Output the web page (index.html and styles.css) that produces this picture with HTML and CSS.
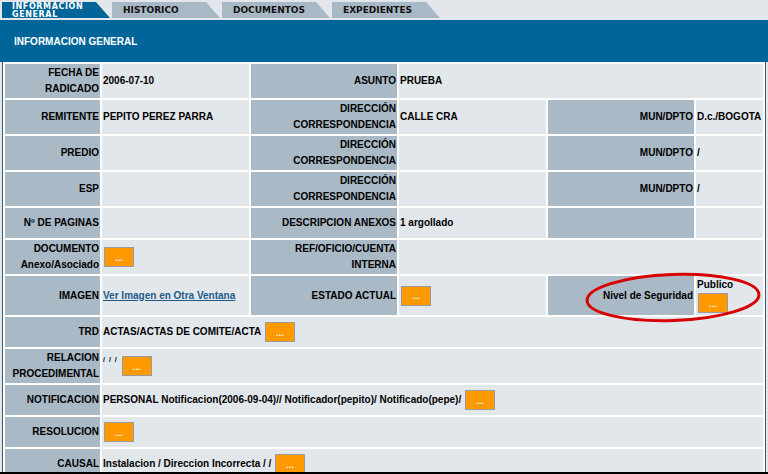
FILE: index.html
```html
<!DOCTYPE html>
<html lang="es">
<head>
    <meta charset="UTF-8">
    <title>Informacion General</title>
    <link rel="stylesheet" href="styles.css">
</head>
<body>
<div class="page">
    <div class="tabs">
        <div class="tab active">INFORMACION<br>GENERAL</div>
        <div class="tab">HISTORICO</div>
        <div class="tab">DOCUMENTOS</div>
        <div class="tab">EXPEDIENTES</div>
    </div>

    <div class="titulo">INFORMACION GENERAL</div>

    <table class="datos">
        <colgroup>
            <col class="c1"><col class="c2"><col class="c3"><col class="c4"><col class="c5"><col>
        </colgroup>
        <tr>
            <td class="lbl">FECHA DE<br>RADICADO</td>
            <td>2006-07-10</td>
            <td class="lbl">ASUNTO</td>
            <td colspan="3">PRUEBA</td>
        </tr>
        <tr>
            <td class="lbl">REMITENTE</td>
            <td>PEPITO PEREZ PARRA</td>
            <td class="lbl">DIRECCIÓN<br>CORRESPONDENCIA</td>
            <td>CALLE CRA</td>
            <td class="lbl">MUN/DPTO</td>
            <td class="nowrap">D.c./BOGOTA</td>
        </tr>
        <tr>
            <td class="lbl">PREDIO</td>
            <td></td>
            <td class="lbl">DIRECCIÓN<br>CORRESPONDENCIA</td>
            <td></td>
            <td class="lbl">MUN/DPTO</td>
            <td>/</td>
        </tr>
        <tr>
            <td class="lbl">ESP</td>
            <td></td>
            <td class="lbl">DIRECCIÓN<br>CORRESPONDENCIA</td>
            <td></td>
            <td class="lbl">MUN/DPTO</td>
            <td>/</td>
        </tr>
        <tr>
            <td class="lbl">Nº DE PAGINAS</td>
            <td></td>
            <td class="lbl">DESCRIPCION ANEXOS</td>
            <td>1 argollado</td>
            <td class="lbl"></td>
            <td></td>
        </tr>
        <tr>
            <td class="lbl">DOCUMENTO<br>Anexo/Asociado</td>
            <td><button class="btn">...</button></td>
            <td class="lbl">REF/OFICIO/CUENTA<br>INTERNA</td>
            <td colspan="3"></td>
        </tr>
        <tr>
            <td class="lbl">IMAGEN</td>
            <td><a href="#" class="enlace">Ver Imagen en Otra Ventana</a></td>
            <td class="lbl">ESTADO ACTUAL</td>
            <td><button class="btn">...</button></td>
            <td class="lbl">Nivel de Seguridad</td>
            <td>
                <div>Publico</div>
                <button class="btn bloque">...</button>
            </td>
        </tr>
        <tr>
            <td class="lbl">TRD</td>
            <td colspan="5">ACTAS/ACTAS DE COMITE/ACTA <button class="btn">...</button></td>
        </tr>
        <tr>
            <td class="lbl">RELACION<br>PROCEDIMENTAL</td>
            <td colspan="5"><span class="chico">/ / /</span> <button class="btn">...</button></td>
        </tr>
        <tr>
            <td class="lbl">NOTIFICACION</td>
            <td colspan="5">PERSONAL Notificacion(2006-09-04)// Notificador(pepito)/ Notificado(pepe)/ <button class="btn">...</button></td>
        </tr>
        <tr>
            <td class="lbl">RESOLUCION</td>
            <td colspan="5"><button class="btn">...</button></td>
        </tr>
        <tr>
            <td class="lbl">CAUSAL</td>
            <td colspan="5">Instalacion / Direccion Incorrecta / / <button class="btn">...</button></td>
        </tr>
    </table>

    <!-- marca roja sobre el nivel de seguridad -->
    <svg class="marca" width="186" height="60" viewBox="0 0 186 60">
        <ellipse cx="91" cy="29.5" rx="86" ry="23" transform="rotate(-2 91 29.5)"
                 fill="none" stroke="#d80000" stroke-width="3"/>
    </svg>
</div>
</body>
</html>
```

FILE: styles.css
```css
body {
    margin: 0;
    background: #e3e7eb;
    font-family: "Liberation Sans", Arial, sans-serif;
    font-size: 10px;
    font-weight: bold;
    color: #000;
}

.page {
    position: relative;
    height: 472px;
    overflow: hidden;
    border-bottom: 2px solid #000;
}

/* pestañas */
.tabs {
    display: flex;
    gap: 2px;
    padding: 2px 0 2px 2px;
}

.tab {
    width: 108px;
    height: 16px;
    box-sizing: border-box;
    padding: 1px 0 0 11px;
    background: #a8b8c4;
    clip-path: polygon(0 0, 94px 0, 100% 100%, 0 100%);
    font-family: "DejaVu Sans", Verdana, sans-serif;
    font-size: 9px;
    line-height: 15px;
    color: #111;
}

.tab.active {
    padding: 1px 0 0 10px;
    background: #006699;
    color: #fff;
    font-size: 8px;
    line-height: 7.5px;
    letter-spacing: 0.6px;
}

.titulo {
    height: 42px;
    line-height: 43px;
    padding-left: 14px;
    background: #006699;
    color: #fff;
}

/* tabla de datos */
.datos {
    width: 764px;
    margin-left: 2px;
    border-left: 1px solid #3f5a6c;
    border-right: 1px solid #3f5a6c;
    border-spacing: 2px;
    table-layout: fixed;
    background: #fff;
}

.c1 { width: 95px; }
.c2 { width: 147px; }
.c3 { width: 146px; }
.c4 { width: 147px; }
.c5 { width: 146px; }

.datos td {
    height: 28px;
    padding: 1px;
    line-height: 16px;
    background: #e2e7eb;
    vertical-align: middle;
}

.datos td.lbl {
    background: #a9b9c5;
    text-align: right;
}

.nowrap {
    white-space: nowrap;
}

.enlace {
    color: #1f5b8a;
}

.chico {
    font-size: 7px;
    line-height: 7px;
    letter-spacing: 1px;
    vertical-align: top;
}

.btn {
    box-sizing: border-box;
    width: 30px;
    height: 20px;
    margin: 0 0 0 1px;
    padding: 3px 0 0;
    background: #ff9900;
    border: 1px solid #9a9a9a;
    color: #fff;
    font: bold 7px "DejaVu Sans", sans-serif;
    vertical-align: middle;
}

.btn.bloque {
    display: block;
    margin: 0 0 1px 1px;
}

.marca {
    position: absolute;
    left: 582px;
    top: 268px;
}
```
